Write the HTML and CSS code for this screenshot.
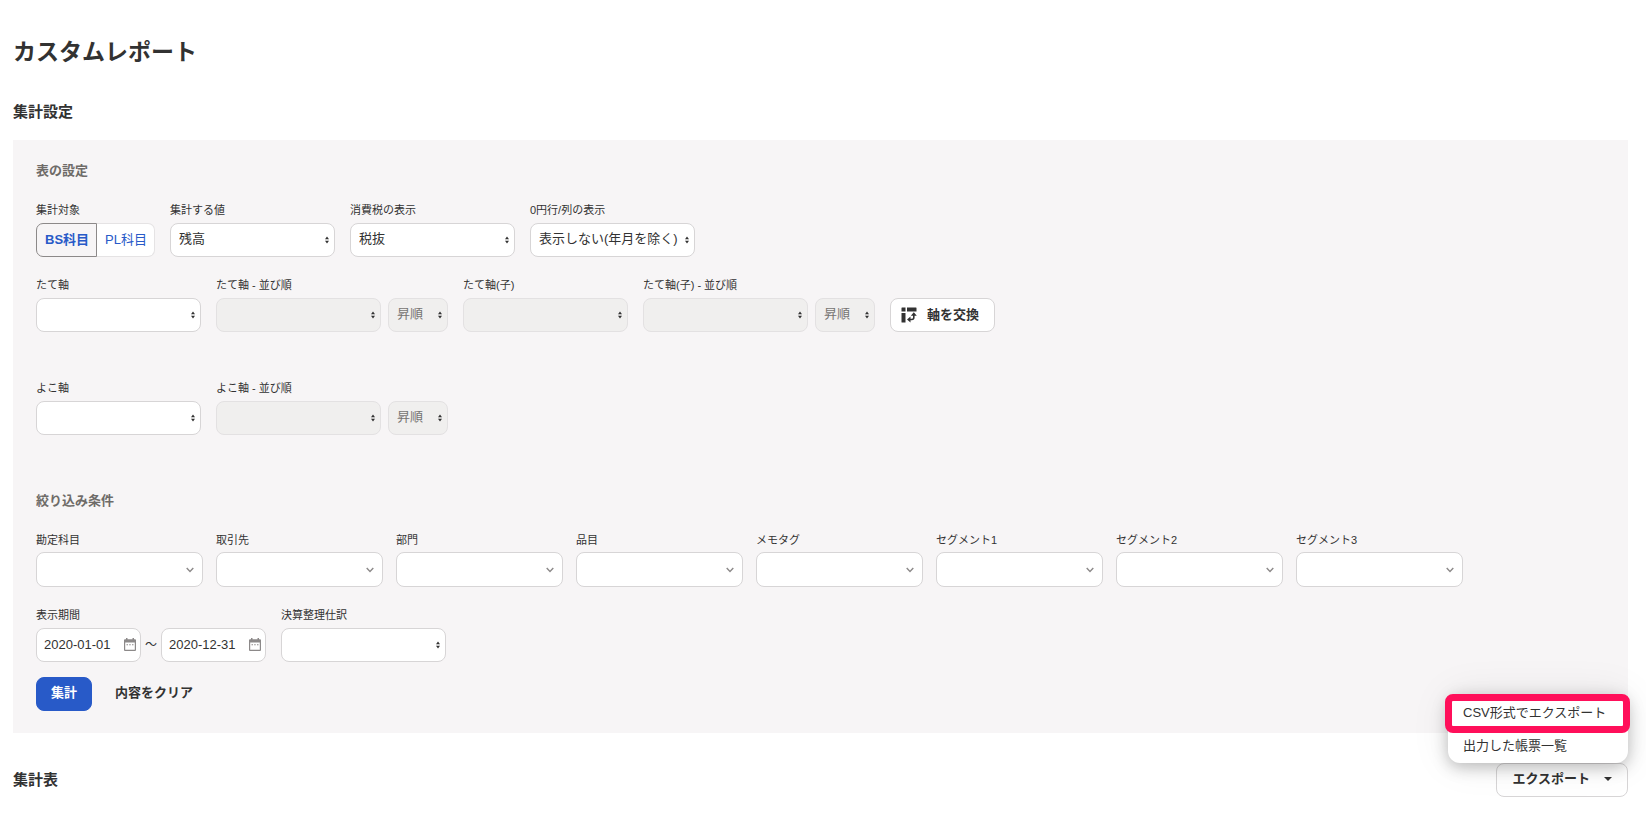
FILE: index.html
```html
<!DOCTYPE html>
<html lang="ja">
<head>
<meta charset="utf-8">
<title>カスタムレポート</title>
<link rel="stylesheet" href="styles.css">
</head>
<body>
<svg class="sprite" aria-hidden="true">
  <symbol id="updown" viewBox="0 0 5 9"><path d="M2.5 0 5 3.5H0zM0 5.5h5L2.500 9z"/></symbol>
  <symbol id="chevron" viewBox="0 0 8 6"><path d="M.7 1 4 4.500 7.300 1" fill="none" stroke="#8c8989" stroke-width="1.400"/></symbol>
  <symbol id="calendar" viewBox="0 0 12 13"><path fill="#8c8989" fill-rule="evenodd" d="M2 0h1.500v1.200h5V0H10v1.200h1q1 0 1 1V12q0 1-1 1H1q-1 0-1-1V2.200q0-1 1-1h1zM1.200 4.500v7.300h9.600V4.500zM2.500 6.200H4v1.100H2.500zm2.700 0h1.500v1.100H5.200zm2.800 0h1.500v1.100H8z"/></symbol>
</svg>
<main class="page">
  <h1 class="page-title">カスタムレポート</h1>
  <h2 class="section-title">集計設定</h2>

  <form class="panel">
    <h3 class="panel-title">表の設定</h3>
    <div class="row">
      <div class="field">
        <span class="label" id="target">集計対象</span>
        <div class="segment" role="group" aria-labelledby="target">
          <button type="button" class="seg seg-on" aria-pressed="true">BS科目</button>
          <button type="button" class="seg" aria-pressed="false">PL科目</button>
        </div>
      </div>
      <div class="field">
        <label class="label" for="value">集計する値</label>
        <div class="select"><select id="value"><option>残高</option></select><svg class="updown"><use href="#updown"/></svg></div>
      </div>
      <div class="field">
        <label class="label" for="tax">消費税の表示</label>
        <div class="select"><select id="tax"><option>税抜</option></select><svg class="updown"><use href="#updown"/></svg></div>
      </div>
      <div class="field">
        <label class="label" for="zero">0円行/列の表示</label>
        <div class="select"><select id="zero"><option>表示しない(年月を除く)</option></select><svg class="updown"><use href="#updown"/></svg></div>
      </div>
    </div>

    <div class="row row-axis">
      <div class="field">
        <label class="label" for="row-axis">たて軸</label>
        <div class="select"><select id="row-axis"><option></option></select><svg class="updown"><use href="#updown"/></svg></div>
      </div>
      <div class="field">
        <label class="label" for="row-sort">たて軸 - 並び順</label>
        <div class="pair">
          <div class="select"><select id="row-sort" disabled><option></option></select><svg class="updown"><use href="#updown"/></svg></div>
          <div class="select select-short"><select aria-label="たて軸の順序" disabled><option>昇順</option></select><svg class="updown"><use href="#updown"/></svg></div>
        </div>
      </div>
      <div class="field">
        <label class="label" for="child-axis">たて軸(子)</label>
        <div class="select"><select id="child-axis" disabled><option></option></select><svg class="updown"><use href="#updown"/></svg></div>
      </div>
      <div class="field">
        <label class="label" for="child-sort">たて軸(子) - 並び順</label>
        <div class="pair">
          <div class="select"><select id="child-sort" disabled><option></option></select><svg class="updown"><use href="#updown"/></svg></div>
          <div class="select select-short"><select aria-label="たて軸(子)の順序" disabled><option>昇順</option></select><svg class="updown"><use href="#updown"/></svg></div>
        </div>
      </div>
      <button type="button" class="btn btn-swap">
        <svg class="swap-icon" viewBox="0 0 16 16" aria-hidden="true"><path fill="#323232" d="M1 .5h3.500v4H.5V1Q.5.500 1 .5zM6 .5h9q.5 0 .5.500v3.500H6zM.5 6h4v9.500H1q-.5 0-.5-.5zM12.800 5.300l3 3.500h-6zM9.500 9.500v6L6 12.500z"/><path fill="none" stroke="#323232" stroke-width="1.600" d="M12.800 8v2.500q0 2-2 2H9"/></svg>
        軸を交換
      </button>
    </div>

    <div class="row row-cross">
      <div class="field">
        <label class="label" for="col-axis">よこ軸</label>
        <div class="select"><select id="col-axis"><option></option></select><svg class="updown"><use href="#updown"/></svg></div>
      </div>
      <div class="field">
        <label class="label" for="col-sort">よこ軸 - 並び順</label>
        <div class="pair">
          <div class="select"><select id="col-sort" disabled><option></option></select><svg class="updown"><use href="#updown"/></svg></div>
          <div class="select select-short"><select aria-label="よこ軸の順序" disabled><option>昇順</option></select><svg class="updown"><use href="#updown"/></svg></div>
        </div>
      </div>
    </div>

    <h3 class="panel-title filter-title">絞り込み条件</h3>
    <div class="row row-filter">
      <div class="field"><label class="label" for="f1">勘定科目</label><div class="select select-filter"><select id="f1"><option></option></select><svg class="chevron"><use href="#chevron"/></svg></div></div>
      <div class="field"><label class="label" for="f2">取引先</label><div class="select select-filter"><select id="f2"><option></option></select><svg class="chevron"><use href="#chevron"/></svg></div></div>
      <div class="field"><label class="label" for="f3">部門</label><div class="select select-filter"><select id="f3"><option></option></select><svg class="chevron"><use href="#chevron"/></svg></div></div>
      <div class="field"><label class="label" for="f4">品目</label><div class="select select-filter"><select id="f4"><option></option></select><svg class="chevron"><use href="#chevron"/></svg></div></div>
      <div class="field"><label class="label" for="f5">メモタグ</label><div class="select select-filter"><select id="f5"><option></option></select><svg class="chevron"><use href="#chevron"/></svg></div></div>
      <div class="field"><label class="label" for="f6">セグメント1</label><div class="select select-filter"><select id="f6"><option></option></select><svg class="chevron"><use href="#chevron"/></svg></div></div>
      <div class="field"><label class="label" for="f7">セグメント2</label><div class="select select-filter"><select id="f7"><option></option></select><svg class="chevron"><use href="#chevron"/></svg></div></div>
      <div class="field"><label class="label" for="f8">セグメント3</label><div class="select select-filter"><select id="f8"><option></option></select><svg class="chevron"><use href="#chevron"/></svg></div></div>
    </div>

    <div class="row row-axis">
      <div class="field">
        <label class="label" for="from">表示期間</label>
        <div class="period">
          <div class="date"><input id="from" type="text" value="2020-01-01"><svg class="calendar"><use href="#calendar"/></svg></div>
          <span class="tilde">～</span>
          <div class="date"><input type="text" aria-label="表示期間の終了日" value="2020-12-31"><svg class="calendar"><use href="#calendar"/></svg></div>
        </div>
      </div>
      <div class="field">
        <label class="label" for="closing">決算整理仕訳</label>
        <div class="select"><select id="closing"><option></option></select><svg class="updown"><use href="#updown"/></svg></div>
      </div>
    </div>

    <div class="actions">
      <button type="button" class="btn btn-primary">集計</button>
      <button type="button" class="btn btn-text">内容をクリア</button>
    </div>
  </form>

  <div class="result-head">
    <h2 class="result-title">集計表</h2>
    <div class="export">
      <button type="button" class="btn btn-export" aria-haspopup="menu" aria-expanded="true">エクスポート
        <svg class="caret" viewBox="0 0 8 4" aria-hidden="true"><path d="M0 0h8L4 4z" fill="#323232"/></svg>
      </button>
      <div class="menu" role="menu">
        <button type="button" class="menu-item menu-item-marked" role="menuitem">CSV形式でエクスポート</button>
        <button type="button" class="menu-item" role="menuitem">出力した帳票一覧</button>
      </div>
    </div>
  </div>
</main>
</body>
</html>
```
FILE: styles.css
```css
* {
  box-sizing: border-box;
}

body {
  margin: 0;
  background: #fff;
  color: #323232;
  font: 13px/20px "Liberation Sans", "Noto Sans CJK JP", sans-serif;
}

button,
input,
select {
  margin: 0;
  color: inherit;
  font: inherit;
}

h1,
h2,
h3 {
  margin: 0;
}

.sprite {
  display: none;
}

.page {
  padding: 34px 18px 28px 13px;
}

.page-title {
  font-size: 23px;
  line-height: 36px;
}

.section-title,
.result-title {
  font-size: 15px;
  line-height: 20px;
}

.section-title {
  margin: 32px 0 18px;
}

.panel {
  padding: 21px 23px 22px;
  background: #f7f5f6;
}

.panel-title {
  margin-bottom: 21px;
  color: #6e6b68;
  font-size: 13px;
  line-height: 20px;
}

.row {
  display: flex;
  align-items: flex-end;
  gap: 15px;
}

.row-axis {
  margin-top: 20px;
}

.row-cross {
  margin-top: 48px;
}

.filter-title {
  margin-top: 56px;
}

.row-filter {
  gap: 13px;
}

.label {
  display: block;
  margin-bottom: 5px;
  font-size: 11px;
  line-height: 16px;
}

.row-filter .label {
  margin-bottom: 4px;
}

.segment {
  display: flex;
}

.seg {
  height: 34px;
  padding: 0 7px 0 8px;
  border: 1px solid #e5e3e4;
  border-left: 0;
  border-radius: 0 7px 7px 0;
  background: #fff;
  color: #285ac8;
}

.seg-on {
  border: 1px solid #8c8989;
  border-radius: 7px 0 0 7px;
  background: #f7f5f6;
  font-weight: 700;
}

.pair,
.period {
  display: flex;
  gap: 7px;
}

.select {
  position: relative;
  width: 165px;
}

.select select {
  display: block;
  width: 100%;
  height: 34px;
  padding: 0 14px 2px 8px;
  border: 1px solid #d7d5d6;
  border-radius: 8px;
  background: #fff;
  appearance: none;
}

.select select:disabled {
  border-color: #e3e1e2;
  background: #f0efee;
  color: #777472;
  opacity: 1;
}

.select-short {
  width: 60px;
}

.select-filter {
  width: 167px;
}

.select-filter select {
  height: 35px;
}

.updown,
.chevron,
.calendar {
  position: absolute;
  pointer-events: none;
}

.updown {
  top: 13px;
  right: 6px;
  width: 4px;
  height: 8px;
  fill: #323232;
}

.chevron {
  top: 15px;
  right: 9px;
  width: 8px;
  height: 6px;
}

.date {
  position: relative;
  width: 105px;
}

.date input {
  display: block;
  width: 100%;
  height: 34px;
  padding: 0 24px 2px 7px;
  border: 1px solid #d7d5d6;
  border-radius: 8px;
  background: #fff;
}

.calendar {
  top: 10px;
  right: 5px;
  width: 12px;
  height: 13px;
}

.period {
  align-items: center;
  gap: 4px;
}

.tilde {
  width: 12px;
  font-size: 12px;
}

.btn {
  display: flex;
  align-items: center;
  height: 34px;
  padding: 0 15px 2px;
  border: 1px solid #d7d5d6;
  border-radius: 8px;
  background: #fff;
  font-weight: 700;
  white-space: nowrap;
}

.btn-swap {
  gap: 10px;
  padding: 0 15px 0 10px;
}

.swap-icon {
  width: 16px;
  height: 16px;
}

.actions {
  display: flex;
  gap: 7px;
  margin-top: 15px;
}

.btn-primary {
  border-color: #285ac8;
  background: #285ac8;
  color: #fff;
  padding: 0 14px 2px;
}

.btn-text {
  border-color: transparent;
  background: transparent;
}

.result-head {
  display: flex;
  align-items: center;
  justify-content: space-between;
  margin-top: 30px;
}

.export {
  position: relative;
}

.btn-export {
  gap: 14px;
}

.caret {
  width: 8px;
  height: 4px;
}

.menu {
  position: absolute;
  right: 0;
  bottom: 100%;
  width: 180px;
  padding: 0 0 4px;
  border-radius: 12px;
  background: #fff;
  box-shadow: 0 4px 16px rgba(0, 0, 0, 0.25), 0 0 40px rgba(0, 0, 0, 0.08);
}

.menu-item {
  display: block;
  width: 100%;
  height: 26px;
  padding: 0 15px;
  border: 0;
  background: transparent;
  text-align: left;
  white-space: nowrap;
}

.menu-item-marked {
  width: calc(100% + 5px);
  height: 39px;
  margin: 0 -2px 0 -3px;
  padding: 0 11px 2px;
  border: 7px solid #ff0f5a;
  border-radius: 8px;
  background: #fff;
}
```
